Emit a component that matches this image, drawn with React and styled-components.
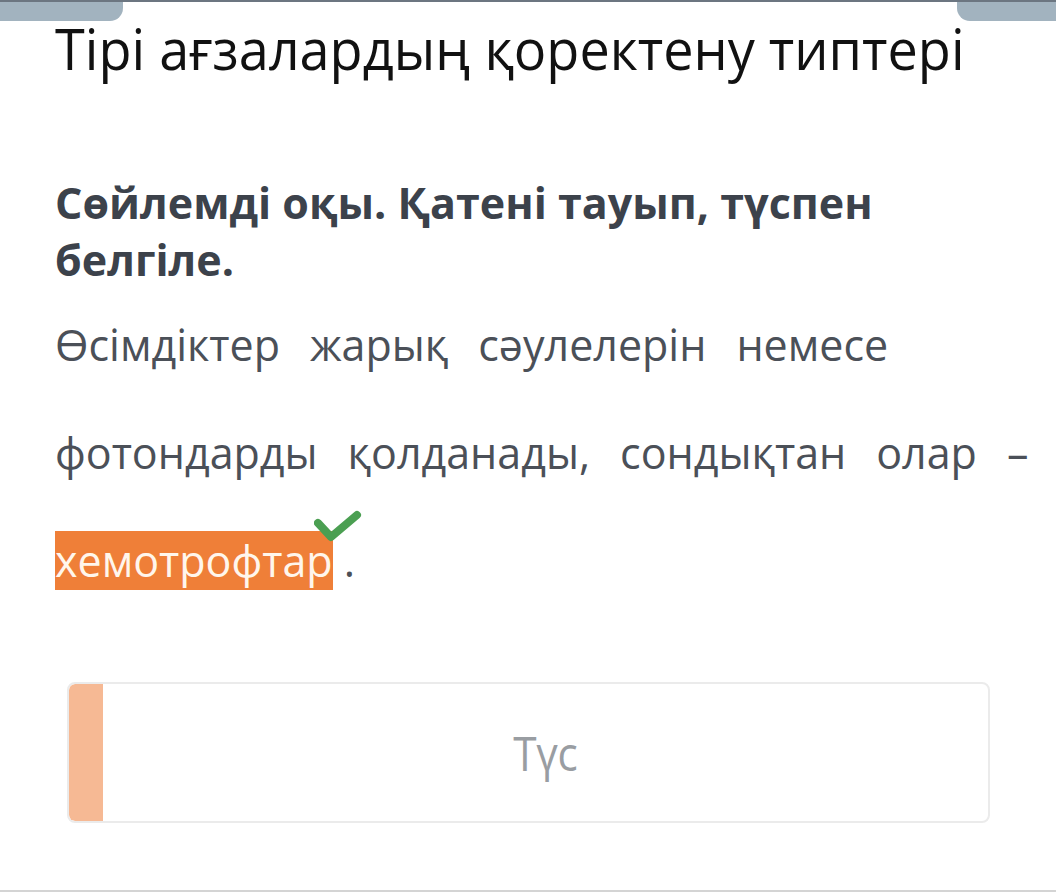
import styled, { createGlobalStyle } from "styled-components";

const GlobalStyle = createGlobalStyle`
  html, body {
    margin: 0;
    padding: 0;
    background: #ffffff;
  }
  body {
    font-family: "Open Sans", "Noto Sans", sans-serif;
  }
`;

const Page = styled.div`
  position: relative;
  width: 1056px;
  height: 892px;
  box-sizing: border-box;
  border-top: 2px solid #6c7681;
  border-bottom: 2px solid #d4d4d4;
  overflow: hidden;
`;

const Tab = styled.div`
  position: absolute;
  top: 0;
  height: 19px;
  background: #a2b3bf;
  left: ${(props) => (props.side === "left" ? "0" : "auto")};
  right: ${(props) => (props.side === "right" ? "0" : "auto")};
  width: ${(props) => (props.side === "left" ? "123px" : "99px")};
  border-radius: ${(props) =>
    props.side === "left" ? "0 0 13px 0" : "0 0 0 13px"};
`;

const Content = styled.div`
  padding: 0 20px 0 55px;
`;

const Title = styled.h1`
  margin: 0;
  padding-top: 12px;
  font-family: "Open Sans", "Noto Sans", sans-serif;
  font-weight: 400;
  font-size: 56px;
  line-height: 68px;
  color: #111111;
  white-space: nowrap;
  transform: scaleX(0.965);
  transform-origin: left center;
`;

const Task = styled.h2`
  margin: 92px 0 0 0;
  font-weight: 700;
  font-size: 43px;
  line-height: 57px;
  color: #3c424b;
`;

const Sentence = styled.div`
  display: flex;
  flex-wrap: wrap;
  column-gap: 30px;
  margin-top: 3px;
  font-size: 43px;
  line-height: 108px;
  color: #4b5058;
`;

const Word = styled.span`
  white-space: pre;
`;

const Marked = styled.span`
  position: relative;
  background: #ef7f38;
  color: #fff6ec;
`;

const Check = styled.svg`
  position: absolute;
  right: -29px;
  top: -23px;
  width: 48px;
  height: 38px;
`;

const ColorButton = styled.div`
  display: flex;
  margin: 67px 66px 0 67px;
  height: 141px;
  box-sizing: border-box;
  border: 2px solid #ebebeb;
  border-radius: 8px;
  overflow: hidden;
`;

const Swatch = styled.div`
  width: 34px;
  background: #f6b994;
  border-radius: 6px 0 0 6px;
`;

const ButtonLabel = styled.div`
  flex: 1;
  display: flex;
  align-items: center;
  justify-content: center;
  font-size: 47px;
  font-weight: 400;
  color: #999da2;
  transform: scaleX(0.9);
`;

const words = [
  "Өсімдіктер",
  "жарық",
  "сәулелерін",
  "немесе",
  "фотондарды",
  "қолданады,",
  "сондықтан",
  "олар",
  "–",
];

const App = () => {
  return (
    <>
      <GlobalStyle />
      <Page>
        <Tab side="left" />
        <Tab side="right" />
        <Content>
          <Title>Тірі ағзалардың қоректену типтері</Title>
          <Task>
            Сөйлемді оқы. Қатені тауып, түспен
            <br />
            белгіле.
          </Task>
          <Sentence>
            {words.map((w) => (
              <Word key={w}>{w}</Word>
            ))}
            <Word>
              <Marked>
                хемотрофтар
                <Check viewBox="0 0 48 38">
                  <path
                    d="M4 15 L17 29 L43 7"
                    fill="none"
                    stroke="#4b9f52"
                    strokeWidth="8"
                    strokeLinecap="round"
                    strokeLinejoin="round"
                  />
                </Check>
              </Marked>{" "}
              .
            </Word>
          </Sentence>
        </Content>
        <ColorButton>
          <Swatch />
          <ButtonLabel>Түс</ButtonLabel>
        </ColorButton>
      </Page>
    </>
  );
};

export default App;
